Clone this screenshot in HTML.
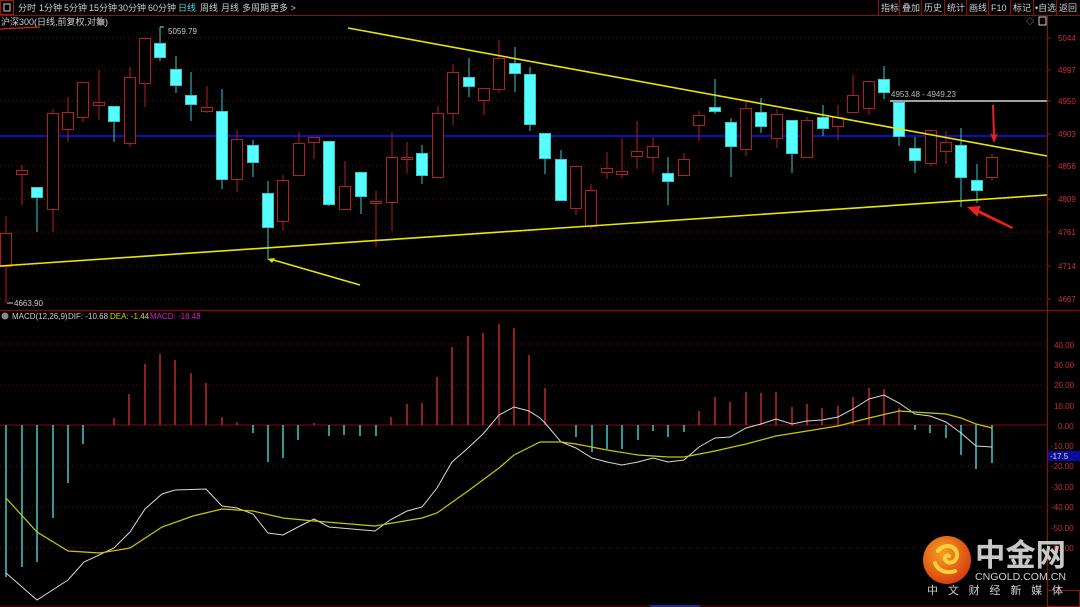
<!DOCTYPE html>
<html><head><meta charset="utf-8"><style>
html,body{margin:0;padding:0;background:#000;width:1080px;height:607px;overflow:hidden}
svg{display:block}
text{font-family:"Liberation Sans","Noto Sans CJK SC",sans-serif}
</style></head><body>
<svg width="1080" height="607" viewBox="0 0 1080 607" xmlns="http://www.w3.org/2000/svg">
<rect width="1080" height="607" fill="#000"/>
<line x1="0" y1="15.5" x2="1080" y2="15.5" stroke="#8b1010"/>
<rect x="0.5" y="0.5" width="13" height="14" fill="none" stroke="#a01818"/>
<rect x="4" y="4" width="6" height="7" fill="none" stroke="#ccc"/>
<g font-size="9" fill="#d0d0d0">
<text x="18" y="11">分时</text><text x="39" y="11">1分钟</text><text x="64" y="11">5分钟</text><text x="89" y="11">15分钟</text><text x="118" y="11">30分钟</text><text x="148" y="11">60分钟</text>
<text x="178" y="11" fill="#4fd8e8">日线</text><text x="200" y="11">周线</text><text x="221" y="11">月线</text><text x="242" y="11">多周期</text><text x="270" y="11">更多 &gt;</text>
</g>
<g stroke="#8b1010"><line x1="878.5" y1="0" x2="878.5" y2="15"/><line x1="899.5" y1="0" x2="899.5" y2="15"/><line x1="921.5" y1="0" x2="921.5" y2="15"/><line x1="944.5" y1="0" x2="944.5" y2="15"/><line x1="966.5" y1="0" x2="966.5" y2="15"/><line x1="988.5" y1="0" x2="988.5" y2="15"/><line x1="1010.5" y1="0" x2="1010.5" y2="15"/><line x1="1033.5" y1="0" x2="1033.5" y2="15"/><line x1="1056.5" y1="0" x2="1056.5" y2="15"/></g>
<g font-size="9" fill="#d0d0d0">
<text x="881" y="11">指标</text><text x="902" y="11">叠加</text><text x="924" y="11">历史</text><text x="947" y="11">统计</text><text x="969" y="11">画线</text><text x="991" y="11">F10</text><text x="1013" y="11">标记</text><text x="1035" y="11">•自选</text><text x="1059" y="11">返回</text>
</g>
<text x="1" y="25" font-size="9" fill="#d0d0d0">沪深300(日线,前复权,对数)</text>
<circle cx="101" cy="22" r="3.5" fill="#888"/>
<line x1="0" y1="29" x2="40" y2="27" stroke="#e02020" stroke-width="1.2"/>
<text x="1026" y="24" font-size="8" fill="#aaa">◇</text>
<rect x="1039" y="17" width="7" height="8" fill="none" stroke="#ccc"/>
<g stroke="#6a1010" stroke-dasharray="1,3">
<line x1="0" y1="38" x2="1047" y2="38"/><line x1="0" y1="70" x2="1047" y2="70"/><line x1="0" y1="101" x2="1047" y2="101"/><line x1="0" y1="166" x2="1047" y2="166"/><line x1="0" y1="199" x2="1047" y2="199"/><line x1="0" y1="232" x2="1047" y2="232"/><line x1="0" y1="266" x2="1047" y2="266"/><line x1="0" y1="299" x2="1047" y2="299"/>
<line x1="0" y1="344" x2="1047" y2="344"/><line x1="0" y1="385" x2="1047" y2="385"/><line x1="0" y1="466" x2="1047" y2="466"/><line x1="0" y1="507" x2="1047" y2="507"/><line x1="0" y1="548" x2="1047" y2="548"/>
</g>
<line x1="0" y1="425" x2="1047" y2="425" stroke="#7a1010"/>
<line x1="0" y1="310.5" x2="1080" y2="310.5" stroke="#7a0c0c" stroke-width="1.5"/>
<line x1="1047.5" y1="16" x2="1047.5" y2="607" stroke="#8b1010"/>
<rect x="1047.5" y="590.5" width="32" height="16" fill="none" stroke="#8b1010"/>
<g font-size="8" fill="#c83030">
<text x="1058" y="41">5044</text><text x="1058" y="73">4997</text><text x="1058" y="104">4950</text><text x="1058" y="137">4903</text><text x="1058" y="169">4856</text><text x="1058" y="202">4809</text><text x="1058" y="235">4761</text><text x="1058" y="269">4714</text><text x="1058" y="302">4667</text>
<text x="1054" y="348">40.00</text><text x="1054" y="368">30.00</text><text x="1054" y="388">20.00</text><text x="1054" y="409">10.00</text><text x="1058" y="429">0.00</text><text x="1051" y="449">-10.00</text><text x="1051" y="469">-20.00</text><text x="1051" y="490">-30.00</text><text x="1051" y="510">-40.00</text><text x="1051" y="531">-50.00</text><text x="1051" y="551">-60.00</text>
</g>
<g stroke="#8b1010"><line x1="1047" y1="38" x2="1051" y2="38"/><line x1="1047" y1="70" x2="1051" y2="70"/><line x1="1047" y1="101" x2="1051" y2="101"/><line x1="1047" y1="134" x2="1051" y2="134"/><line x1="1047" y1="166" x2="1051" y2="166"/><line x1="1047" y1="199" x2="1051" y2="199"/><line x1="1047" y1="232" x2="1051" y2="232"/><line x1="1047" y1="266" x2="1051" y2="266"/><line x1="1047" y1="299" x2="1051" y2="299"/></g>
<rect x="1048" y="451" width="32" height="10" fill="#0a0a9a"/>
<text x="1050" y="459" font-size="8" fill="#ddd">-17.5</text>
<line x1="0" y1="136" x2="1047" y2="136" stroke="#1010ff" stroke-width="1.5"/>
<g stroke="#b02020" fill="#000">
<line x1="6" y1="216" x2="6" y2="303"/><rect x="0.5" y="233.5" width="11" height="33"/>
<line x1="22" y1="165" x2="22" y2="205"/><rect x="16.5" y="170.5" width="11" height="4"/>
<line x1="53" y1="109" x2="53" y2="232"/><rect x="47.5" y="113.5" width="11" height="96"/>
<line x1="68" y1="97" x2="68" y2="142"/><rect x="62.5" y="112.5" width="11" height="17"/>
<line x1="83" y1="82" x2="83" y2="122"/><rect x="77.5" y="82.5" width="11" height="35"/>
<line x1="99" y1="70" x2="99" y2="120"/><rect x="93.5" y="102.5" width="11" height="3"/>
<line x1="130" y1="67" x2="130" y2="147"/><rect x="124.5" y="77.5" width="11" height="66"/>
<line x1="145" y1="38" x2="145" y2="107"/><rect x="139.5" y="38.5" width="11" height="45"/>
<line x1="207" y1="86" x2="207" y2="113"/><rect x="201.5" y="107.5" width="11" height="4"/>
<line x1="237" y1="130" x2="237" y2="192"/><rect x="231.5" y="139.5" width="11" height="40"/>
<line x1="283" y1="175" x2="283" y2="231"/><rect x="277.5" y="180.5" width="11" height="41"/>
<line x1="299" y1="132" x2="299" y2="175"/><rect x="293.5" y="143.5" width="11" height="32"/>
<line x1="314" y1="137" x2="314" y2="159"/><rect x="308.5" y="137.5" width="11" height="5"/>
<line x1="345" y1="161" x2="345" y2="209"/><rect x="339.5" y="186.5" width="11" height="23"/>
<line x1="376" y1="191" x2="376" y2="247"/><rect x="370.5" y="201.5" width="11" height="2"/>
<line x1="392" y1="132" x2="392" y2="231"/><rect x="386.5" y="157.5" width="11" height="45"/>
<line x1="407" y1="142" x2="407" y2="173"/><rect x="401.5" y="157.5" width="11" height="2"/>
<line x1="438" y1="106" x2="438" y2="178"/><rect x="432.5" y="113.5" width="11" height="64"/>
<line x1="453" y1="64" x2="453" y2="125"/><rect x="447.5" y="72.5" width="11" height="41"/>
<line x1="484" y1="88" x2="484" y2="115"/><rect x="478.5" y="88.5" width="11" height="12"/>
<line x1="499" y1="40" x2="499" y2="93"/><rect x="493.5" y="58.5" width="11" height="31"/>
<line x1="576" y1="166" x2="576" y2="215"/><rect x="570.5" y="166.5" width="11" height="42"/>
<line x1="591" y1="184" x2="591" y2="229"/><rect x="585.5" y="190.5" width="11" height="36"/>
<line x1="607" y1="152" x2="607" y2="179"/><rect x="601.5" y="168.5" width="11" height="4"/>
<line x1="622" y1="138" x2="622" y2="178"/><rect x="616.5" y="171.5" width="11" height="3"/>
<line x1="637" y1="121" x2="637" y2="169"/><rect x="631.5" y="151.5" width="11" height="5"/>
<line x1="653" y1="137" x2="653" y2="173"/><rect x="647.5" y="146.5" width="11" height="11"/>
<line x1="684" y1="153" x2="684" y2="175"/><rect x="678.5" y="159.5" width="11" height="16"/>
<line x1="699" y1="111" x2="699" y2="141"/><rect x="693.5" y="115.5" width="11" height="10"/>
<line x1="746" y1="102" x2="746" y2="156"/><rect x="740.5" y="108.5" width="11" height="41"/>
<line x1="777" y1="109" x2="777" y2="148"/><rect x="771.5" y="114.5" width="11" height="24"/>
<line x1="807" y1="117" x2="807" y2="157"/><rect x="801.5" y="120.5" width="11" height="37"/>
<line x1="838" y1="105" x2="838" y2="140"/><rect x="832.5" y="117.5" width="11" height="9"/>
<line x1="853" y1="75" x2="853" y2="113"/><rect x="847.5" y="95.5" width="11" height="17"/>
<line x1="869" y1="81" x2="869" y2="115"/><rect x="863.5" y="81.5" width="11" height="27"/>
<line x1="931" y1="130" x2="931" y2="166"/><rect x="925.5" y="130.5" width="11" height="33"/>
<line x1="946" y1="131" x2="946" y2="164"/><rect x="940.5" y="142.5" width="11" height="9"/>
<line x1="992" y1="154" x2="992" y2="181"/><rect x="986.5" y="157.5" width="11" height="20"/>
</g>
<g stroke="#3cc8c8" fill="#55ffff">
<line x1="37" y1="187" x2="37" y2="232"/><rect x="31.5" y="187.5" width="11" height="10"/>
<line x1="114" y1="106" x2="114" y2="142"/><rect x="108.5" y="106.5" width="11" height="15"/>
<line x1="160" y1="27" x2="160" y2="61"/><rect x="154.5" y="43.5" width="11" height="14"/>
<line x1="176" y1="56" x2="176" y2="93"/><rect x="170.5" y="69.5" width="11" height="16"/>
<line x1="191" y1="72" x2="191" y2="121"/><rect x="185.5" y="95.5" width="11" height="9"/>
<line x1="222" y1="89" x2="222" y2="189"/><rect x="216.5" y="111.5" width="11" height="68"/>
<line x1="253" y1="140" x2="253" y2="177"/><rect x="247.5" y="145.5" width="11" height="17"/>
<line x1="268" y1="181" x2="268" y2="260"/><rect x="262.5" y="193.5" width="11" height="34"/>
<line x1="329" y1="141" x2="329" y2="206"/><rect x="323.5" y="141.5" width="11" height="63"/>
<line x1="361" y1="172" x2="361" y2="214"/><rect x="355.5" y="172.5" width="11" height="24"/>
<line x1="422" y1="145" x2="422" y2="184"/><rect x="416.5" y="153.5" width="11" height="22"/>
<line x1="469" y1="58" x2="469" y2="97"/><rect x="463.5" y="77.5" width="11" height="9"/>
<line x1="515" y1="47" x2="515" y2="92"/><rect x="509.5" y="63.5" width="11" height="10"/>
<line x1="530" y1="67" x2="530" y2="131"/><rect x="524.5" y="74.5" width="11" height="50"/>
<line x1="545" y1="133" x2="545" y2="174"/><rect x="539.5" y="133.5" width="11" height="25"/>
<line x1="561" y1="150" x2="561" y2="200"/><rect x="555.5" y="159.5" width="11" height="41"/>
<line x1="668" y1="157" x2="668" y2="205"/><rect x="662.5" y="173.5" width="11" height="8"/>
<line x1="715" y1="79" x2="715" y2="114"/><rect x="709.5" y="107.5" width="11" height="4"/>
<line x1="731" y1="118" x2="731" y2="177"/><rect x="725.5" y="122.5" width="11" height="24"/>
<line x1="761" y1="98" x2="761" y2="133"/><rect x="755.5" y="112.5" width="11" height="14"/>
<line x1="792" y1="120" x2="792" y2="173"/><rect x="786.5" y="120.5" width="11" height="33"/>
<line x1="823" y1="105" x2="823" y2="136"/><rect x="817.5" y="117.5" width="11" height="11"/>
<line x1="884" y1="66" x2="884" y2="99"/><rect x="878.5" y="79.5" width="11" height="13"/>
<line x1="899" y1="102" x2="899" y2="146"/><rect x="893.5" y="102.5" width="11" height="34"/>
<line x1="915" y1="137" x2="915" y2="173"/><rect x="909.5" y="148.5" width="11" height="12"/>
<line x1="961" y1="128" x2="961" y2="207"/><rect x="955.5" y="145.5" width="11" height="32"/>
<line x1="977" y1="164" x2="977" y2="203"/><rect x="971.5" y="180.5" width="11" height="10"/>
</g>
<g font-size="8" fill="#ccc">
<path d="M160 27h4" stroke="#ccc"/><text x="168" y="34">5059.79</text>
<path d="M7 303h6" stroke="#ccc"/><text x="14" y="306">4663.90</text>
</g>
<line x1="348" y1="28" x2="1047" y2="156" stroke="#e6e600" stroke-width="1.6"/>
<line x1="0" y1="266" x2="1047" y2="195" stroke="#e6e600" stroke-width="1.6"/>
<line x1="360" y1="285" x2="270" y2="259" stroke="#e6e600" stroke-width="1.6"/>
<path d="M268 259l7 -1l-3 5z" fill="#e6e600"/>
<line x1="890" y1="101" x2="1047" y2="101" stroke="#a0a0a0" stroke-width="2"/>
<text x="891" y="97" font-size="8" fill="#bbb">4953.48 - 4949.23</text>
<path d="M992 105 L994 105 L995 135 L998 133 L994 143 L990 133 L993 135 Z" fill="#ee2020"/>
<path d="M1013 227 L1012 229 L978 213 L978 217 L967 207 L981 206 L979 210 Z" fill="#ee2020"/>
<circle cx="5" cy="316" r="3.5" fill="#888"/>
<text x="12" y="319" font-size="8" fill="#ccc">MACD(12,26,9)</text>
<text x="68" y="319" font-size="8" fill="#ccc">DIF: -10.68</text>
<text x="110" y="319" font-size="8" fill="#d8d800">DEA: -1.44</text>
<text x="150" y="319" font-size="8" fill="#d020d0">MACD: -18.48</text>
<g stroke="#40c8c8" stroke-width="1.5">
<line x1="6" y1="425" x2="6" y2="577"/><line x1="22" y1="425" x2="22" y2="567"/><line x1="37" y1="425" x2="37" y2="562"/><line x1="53" y1="425" x2="53" y2="518"/><line x1="68" y1="425" x2="68" y2="483"/><line x1="83" y1="425" x2="83" y2="444"/>
<line x1="253" y1="425" x2="253" y2="433"/><line x1="268" y1="425" x2="268" y2="462"/><line x1="283" y1="425" x2="283" y2="458"/><line x1="298" y1="425" x2="298" y2="440"/><line x1="329" y1="425" x2="329" y2="436"/><line x1="344" y1="425" x2="344" y2="435"/><line x1="360" y1="425" x2="360" y2="436"/><line x1="376" y1="425" x2="376" y2="436"/>
<line x1="576" y1="425" x2="576" y2="437"/><line x1="592" y1="425" x2="592" y2="452"/><line x1="607" y1="425" x2="607" y2="449"/><line x1="622" y1="425" x2="622" y2="449"/><line x1="638" y1="425" x2="638" y2="440"/><line x1="653" y1="425" x2="653" y2="431"/><line x1="668" y1="425" x2="668" y2="437"/><line x1="684" y1="425" x2="684" y2="432"/>
<line x1="915" y1="425" x2="915" y2="430"/><line x1="930" y1="425" x2="930" y2="433"/><line x1="946" y1="425" x2="946" y2="438"/><line x1="961" y1="425" x2="961" y2="455"/><line x1="976" y1="425" x2="976" y2="469"/><line x1="992" y1="425" x2="992" y2="463"/>
</g>
<g stroke="#c02828" stroke-width="1.5">
<line x1="114" y1="425" x2="114" y2="418"/><line x1="129" y1="425" x2="129" y2="394"/><line x1="145" y1="425" x2="145" y2="364"/><line x1="160" y1="425" x2="160" y2="354"/><line x1="175" y1="425" x2="175" y2="360"/><line x1="191" y1="425" x2="191" y2="373"/><line x1="206" y1="425" x2="206" y2="383"/><line x1="222" y1="425" x2="222" y2="417"/><line x1="237" y1="425" x2="237" y2="422"/><line x1="314" y1="425" x2="314" y2="423"/>
<line x1="391" y1="425" x2="391" y2="417"/><line x1="407" y1="425" x2="407" y2="404"/><line x1="422" y1="425" x2="422" y2="403"/><line x1="437" y1="425" x2="437" y2="377"/><line x1="452" y1="425" x2="452" y2="347"/><line x1="468" y1="425" x2="468" y2="336"/><line x1="483" y1="425" x2="483" y2="333"/><line x1="499" y1="425" x2="499" y2="324"/><line x1="514" y1="425" x2="514" y2="328"/><line x1="529" y1="425" x2="529" y2="355"/><line x1="545" y1="425" x2="545" y2="388"/>
<line x1="699" y1="425" x2="699" y2="411"/><line x1="715" y1="425" x2="715" y2="397"/><line x1="730" y1="425" x2="730" y2="402"/><line x1="746" y1="425" x2="746" y2="392"/><line x1="761" y1="425" x2="761" y2="393"/><line x1="776" y1="425" x2="776" y2="392"/><line x1="792" y1="425" x2="792" y2="407"/><line x1="807" y1="425" x2="807" y2="404"/><line x1="822" y1="425" x2="822" y2="408"/><line x1="838" y1="425" x2="838" y2="406"/><line x1="853" y1="425" x2="853" y2="397"/><line x1="869" y1="425" x2="869" y2="388"/><line x1="884" y1="425" x2="884" y2="389"/><line x1="899" y1="425" x2="899" y2="408"/>
</g>
<polyline fill="none" stroke="#d8d8d8" stroke-width="1" points="6,573 37,600 68,580 84,562 114,548 130,532 145,509 162,494 175,490 206,489 222,506 237,508 253,514 268,533 283,535 298,527 314,519 329,527 375,531 390,520 407,511 422,507 437,488 452,462 468,448 483,434 499,415 514,407 529,411 540,418 545,423 561,442 576,448 592,458 607,462 622,465 638,462 653,458 668,462 684,460 699,447 715,438 730,437 746,428 761,424 776,419 792,424 807,421 822,420 838,417 853,409 869,399 884,395 899,403 915,414 930,416 946,422 961,433 976,446 992,447"/>
<polyline fill="none" stroke="#c8c800" stroke-width="1.2" points="6,498 37,532 68,551 100,553 130,548 162,527 193,516 222,509 253,511 283,518 314,521 375,526 422,518 437,513 468,491 499,468 514,455 540,442 561,442 576,444 607,450 638,455 668,457 684,457 715,451 746,444 776,436 807,431 838,426 869,418 899,411 930,413 946,414 961,418 976,424 992,428"/>
<line x1="0" y1="606" x2="1047" y2="606" stroke="#5a0808"/>
<line x1="650" y1="606" x2="700" y2="606" stroke="#5050ff"/>
<defs><radialGradient id="lg" cx="0.4" cy="0.35" r="0.7"><stop offset="0" stop-color="#f7a020"/><stop offset="1" stop-color="#d63a10"/></radialGradient></defs>
<circle cx="947" cy="560" r="24" fill="url(#lg)"/>
<path d="M938 551c6-8 18-6 19 3c1 7-7 11-11 7c-3-3 0-7 3-5M935 563c3 8 12 11 20 8" fill="none" stroke="#f8d040" stroke-width="4" stroke-linecap="round"/>
<text x="975" y="566" font-size="31" font-weight="bold" fill="#c8c8c8" textLength="91" lengthAdjust="spacingAndGlyphs" font-family="'Noto Sans CJK SC',sans-serif">中金网</text>
<text x="975" y="580" font-size="10" fill="#d0d0d0" textLength="91" lengthAdjust="spacingAndGlyphs">CNGOLD.COM.CN</text>
<text x="927" y="594" font-size="11" fill="#d0d0d0" textLength="136" lengthAdjust="spacing" font-family="'Noto Sans CJK SC',sans-serif">中文财经新媒体</text>
</svg>
</body></html>
